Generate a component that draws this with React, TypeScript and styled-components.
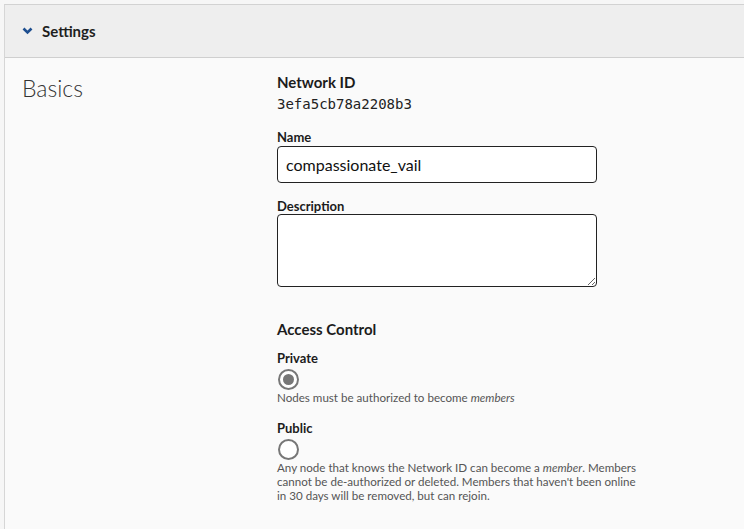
import React, { useState } from 'react'
import styled, { createGlobalStyle } from 'styled-components'

const GlobalStyle = createGlobalStyle`
  html, body {
    margin: 0;
    padding: 0;
    background: #f6f6f6;
    font-family: Lato, "Noto Sans", sans-serif;
    color: #222;
  }
`

const Panel = styled.section`
  margin: 4px 0 0 4px;
  border-left: 1px solid #d6d6d6;
  border-top: 1px solid #d2d2d2;
  background: #fafafa;
  min-height: 525px;
`

const PanelHeader = styled.header`
  height: 52px;
  display: flex;
  align-items: center;
  gap: 9px;
  padding-left: 17px;
  background: #eeeeee;
  border-bottom: 1px solid #cfcfcf;
  font-size: 15px;
  font-weight: 700;
  color: #1f1f1f;
`

const Body = styled.div`
  display: grid;
  grid-template-columns: 272px 380px;
  padding-top: 14px;
`

const SectionTitle = styled.h2`
  margin: 0 0 0 17px;
  font-size: 23px;
  font-weight: 300;
  color: #333;
  line-height: 32px;
`

const Fields = styled.div`
  display: flex;
  flex-direction: column;
`

const FieldHeading = styled.div<{ $top?: number }>`
  margin-top: ${p => p.$top ?? 0}px;
  font-size: 15px;
  font-weight: 700;
  line-height: 20px;
  color: #1c1c1c;
`

const IdText = styled.div`
  font-family: "DejaVu Sans Mono", "Liberation Mono", monospace;
  font-size: 14px;
  line-height: 20px;
  color: #222;
  margin-top: 2px;
`

const Label = styled.label<{ $top: number }>`
  display: block;
  margin-top: ${p => p.$top}px;
  font-size: 13px;
  font-weight: 700;
  line-height: 16px;
  color: #1c1c1c;
`

const TextInput = styled.input`
  box-sizing: border-box;
  width: 320px;
  height: 37px;
  margin-top: 1px;
  padding: 0 8px;
  border: 1px solid #222;
  border-radius: 4px;
  background: #fff;
  font-family: Lato, "Noto Sans", sans-serif;
  font-size: 16px;
  color: #111;
  outline: none;
`

const TextArea = styled.textarea`
  box-sizing: border-box;
  display: block;
  width: 320px;
  height: 73px;
  border: 1px solid #222;
  border-radius: 4px;
  background: #fff;
  font-family: Lato, "Noto Sans", sans-serif;
  font-size: 15px;
  outline: none;
`

const RadioCircle = styled.span<{ $checked?: boolean }>`
  box-sizing: border-box;
  display: flex;
  align-items: center;
  justify-content: center;
  width: 21px;
  height: 21px;
  margin: 3px 0 0 1px;
  border: 2px solid #777;
  border-radius: 50%;
  background: #fff;
  cursor: pointer;

  &::after {
    content: '';
    display: ${p => (p.$checked ? 'block' : 'none')};
    width: 11px;
    height: 11px;
    border-radius: 50%;
    background: #777;
  }
`

const Help = styled.p`
  margin: 1px 0 0;
  font-size: 11.6px;
  line-height: 14px;
  color: #555;
  white-space: nowrap;
`

const Chevron = () => (
  <svg width="11" height="8" viewBox="0 0 11 8">
    <polyline points="1.5,1.5 5.5,5.5 9.5,1.5" fill="none" stroke="#1d4e8f" strokeWidth="2.6" />
  </svg>
)

const App: React.FC = () => {
  const [access, setAccess] = useState<'private' | 'public'>('private')

  return (
    <>
      <GlobalStyle />
      <Panel>
        <PanelHeader>
          <Chevron />
          Settings
        </PanelHeader>
        <Body>
          <SectionTitle>Basics</SectionTitle>
          <Fields>
            <FieldHeading>Network ID</FieldHeading>
            <IdText>3efa5cb78a2208b3</IdText>

            <Label $top={15}>Name</Label>
            <TextInput defaultValue="compassionate_vail" />

            <Label $top={15}>Description</Label>
            <TextArea />

            <FieldHeading $top={32}>Access Control</FieldHeading>

            <Label $top={11}>Private</Label>
            <RadioCircle $checked={access === 'private'} onClick={() => setAccess('private')} />
            <Help>Nodes must be authorized to become <em>members</em></Help>

            <Label $top={15}>Public</Label>
            <RadioCircle $checked={access === 'public'} onClick={() => setAccess('public')} />
            <Help>
              Any node that knows the Network ID can become a <em>member</em>. Members
              <br />
              cannot be de-authorized or deleted. Members that haven't been online
              <br />
              in 30 days will be removed, but can rejoin.
            </Help>
          </Fields>
        </Body>
      </Panel>
    </>
  )
}

export default App
